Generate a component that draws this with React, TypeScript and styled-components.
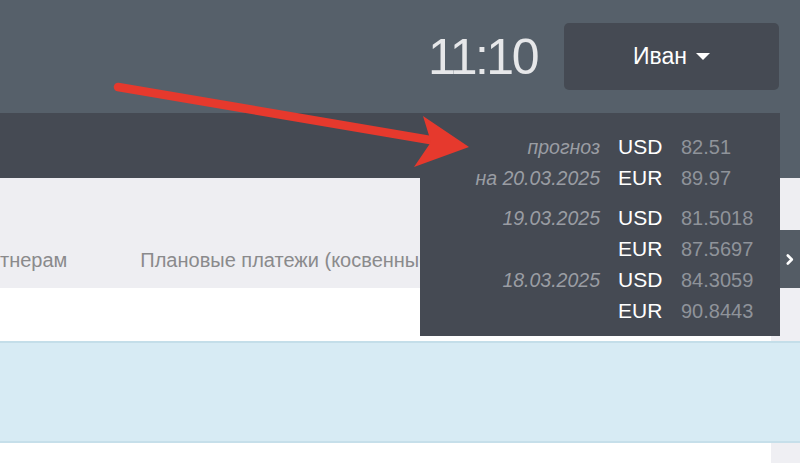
import React from 'react';
import styled, { createGlobalStyle } from 'styled-components';

const GlobalStyle = createGlobalStyle`
  html, body { margin: 0; padding: 0; background: #ffffff; }
  body { font-family: "Liberation Sans", Arial, Helvetica, sans-serif; overflow: hidden; }
  * { box-sizing: border-box; }
`;

const Page = styled.div`
  position: relative;
  width: 800px;
  height: 463px;
  overflow: hidden;
  display: flex;
  flex-direction: column;
`;

const Header = styled.header`
  height: 113px;
  flex-shrink: 0;
  background: #56606a;
  display: flex;
  align-items: center;
  justify-content: flex-end;
  padding-right: 21px;
`;

const Clock = styled.div`
  font-size: 50px;
  letter-spacing: -2.5px;
  line-height: 1;
  color: #e6e7e9;
  margin-right: 27px;
  margin-top: 1px;
`;

const UserButton = styled.button`
  width: 215px;
  height: 67px;
  border: none;
  border-radius: 5px;
  background: #454a53;
  color: #ffffff;
  font-family: inherit;
  font-size: 23px;
  display: flex;
  align-items: center;
  justify-content: center;
  gap: 9px;
  padding: 0;
`;

const Caret = styled.span`
  width: 0;
  height: 0;
  border-left: 7px solid transparent;
  border-right: 7px solid transparent;
  border-top: 7px solid #ffffff;
`;

const Row = styled.div<{ $h?: number }>`
  display: flex;
  flex-shrink: 0;
  ${(p) => (p.$h ? `height: ${p.$h}px;` : 'flex: 1;')}
`;

const Main = styled.div<{ $bg: string }>`
  flex: 1;
  background: ${(p) => p.$bg};
`;

const Side = styled.div<{ $w: number; $bg: string }>`
  width: ${(p) => p.$w}px;
  background: ${(p) => p.$bg};
  display: flex;
  flex-direction: column;
  justify-content: flex-end;
`;

const TabList = styled.nav`
  flex: 1;
  background: #eeeef2;
  display: flex;
  align-items: flex-start;
  gap: 73px;
  padding-top: 70px;
  overflow: hidden;
  white-space: nowrap;
`;

const Tab = styled.span`
  font-size: 20px;
  line-height: 24px;
  color: #8a8a8c;
`;

const ScrollButton = styled.div`
  height: 58px;
  background: #545c65;
  display: flex;
  align-items: center;
  justify-content: center;
`;

const HighlightRow = styled.div`
  height: 102px;
  flex-shrink: 0;
  background: #d7ebf4;
  border-top: 2px solid #c4dee9;
  border-bottom: 2px solid #c6dfea;
`;

const Dropdown = styled.div`
  position: absolute;
  top: 113px;
  left: 420px;
  width: 360px;
  height: 223px;
  background: #454a53;
  padding-top: 19px;
  z-index: 1;
`;

const Group = styled.div<{ $after: number }>`
  margin-bottom: ${(p) => p.$after}px;
`;

const RateRow = styled.div`
  display: grid;
  grid-template-columns: 198px 63px 1fr;
  align-items: baseline;
  height: 31px;
  line-height: 24px;
  padding-top: 3px;
`;

const DateLabel = styled.span`
  font-size: 19.5px;
  font-style: italic;
  color: #9a9da3;
  text-align: right;
  padding-right: 18px;
  white-space: nowrap;
`;

const Currency = styled.span`
  font-size: 21px;
  color: #ffffff;
`;

const Value = styled.span`
  font-size: 20px;
  color: #8f939a;
`;

const ArrowLayer = styled.svg`
  position: absolute;
  left: 0;
  top: 0;
  z-index: 2;
  pointer-events: none;
`;

type Rate = { label: string; cur: string; val: string };

const groups: { rows: Rate[]; after: number }[] = [
  {
    rows: [
      { label: 'прогноз', cur: 'USD', val: '82.51' },
      { label: 'на 20.03.2025', cur: 'EUR', val: '89.97' },
    ],
    after: 9,
  },
  {
    rows: [
      { label: '19.03.2025', cur: 'USD', val: '81.5018' },
      { label: '', cur: 'EUR', val: '87.5697' },
    ],
    after: 0,
  },
  {
    rows: [
      { label: '18.03.2025', cur: 'USD', val: '84.3059' },
      { label: '', cur: 'EUR', val: '90.8443' },
    ],
    after: 0,
  },
];

export default function App() {
  return (
    <>
      <GlobalStyle />
      <Page>
        <Header>
          <Clock>11:10</Clock>
          <UserButton>
            Иван
            <Caret />
          </UserButton>
        </Header>

        <Row $h={65}>
          <Main $bg="#454a53" />
          <Side $w={20} $bg="#56606a" />
        </Row>

        <Row $h={110}>
          <TabList>
            <Tab>тнерам</Tab>
            <Tab>Плановые платежи (косвенные)</Tab>
          </TabList>
          <Side $w={20} $bg="#eeeef2">
            <ScrollButton>
              <svg width="8" height="11" viewBox="0 0 8 11">
                <polyline
                  points="1.8,1.5 5.8,5.5 1.8,9.5"
                  fill="none"
                  stroke="#ffffff"
                  strokeWidth="2.6"
                  strokeLinecap="round"
                  strokeLinejoin="round"
                />
              </svg>
            </ScrollButton>
          </Side>
        </Row>

        <Row $h={53}>
          <Main $bg="#ffffff" />
          <Side $w={29} $bg="#efeff3" />
        </Row>

        <HighlightRow />

        <Row>
          <Main $bg="#ffffff" />
          <Side $w={29} $bg="#efeff3" />
        </Row>

        <Dropdown>
          {groups.map((g, gi) => (
            <Group key={gi} $after={g.after}>
              {g.rows.map((r, ri) => (
                <RateRow key={ri}>
                  <DateLabel>{r.label}</DateLabel>
                  <Currency>{r.cur}</Currency>
                  <Value>{r.val}</Value>
                </RateRow>
              ))}
            </Group>
          ))}
        </Dropdown>

        <ArrowLayer width="800" height="463" viewBox="0 0 800 463">
          <path d="M118 87 L436 141" stroke="#e6392d" strokeWidth="8.5" strokeLinecap="round" fill="none" />
          <polygon points="423,116 469,147 414,167 431,142" fill="#e6392d" />
        </ArrowLayer>
      </Page>
    </>
  );
}
